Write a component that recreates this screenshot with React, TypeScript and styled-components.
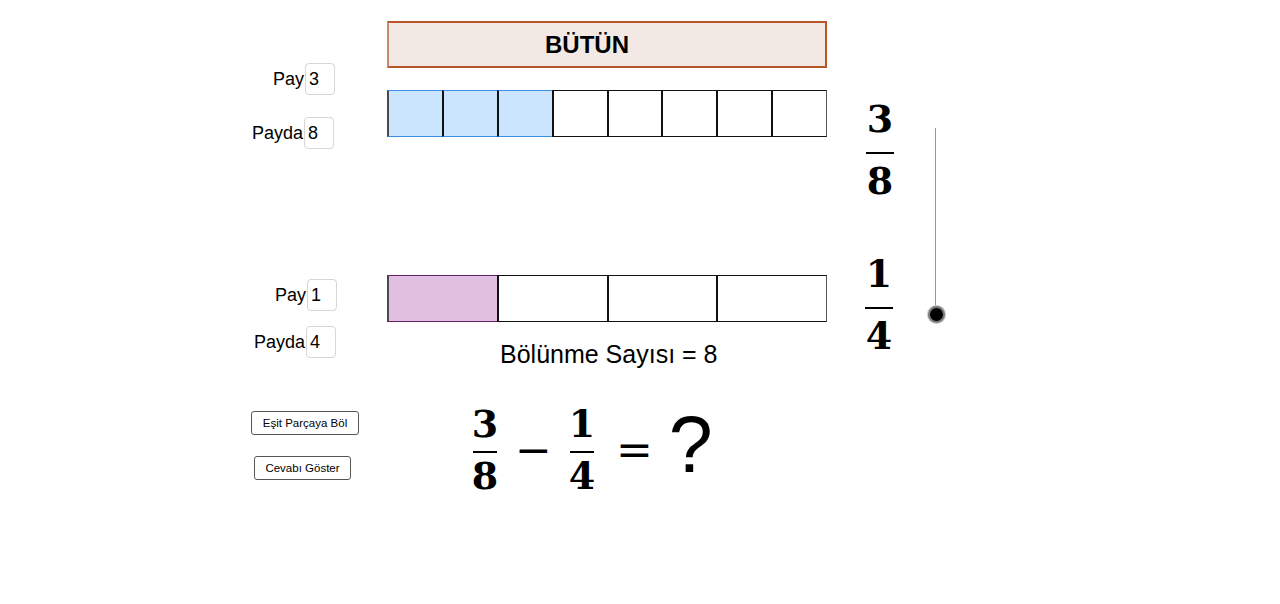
import styled, { createGlobalStyle, css } from 'styled-components';

const GlobalStyle = createGlobalStyle`
  html, body { margin: 0; padding: 0; background: #fff; }
  body { font-family: "Liberation Sans", Arial, sans-serif; color: #000; }
`;

type Pos = { $x: number; $y: number };

// geogebra-like canvas: objects sit at their own coordinates
const at = css<Pos>`
  position: absolute;
  left: ${(p) => p.$x}px;
  top: ${(p) => p.$y}px;
`;

const Applet = styled.div`
  position: relative;
  width: 1280px;
  height: 604px;
  overflow: hidden;
  background: #fff;
`;

const TitleBox = styled.div<Pos>`
  ${at};
  box-sizing: border-box;
  width: 440px;
  height: 47px;
  display: flex;
  align-items: center;
  padding-left: 156px;
  background: #f2e9e4;
  border: 2px solid #b9572a;
  border-left-color: #c98a6c;
  font: bold 24px "Liberation Sans", Arial, sans-serif;
`;

const Bar = styled.div<Pos>`
  ${at};
  display: flex;
  width: 440px;
  height: 47px;
`;

const Cell = styled.div<{ $fill?: string; $edge?: string }>`
  flex: 1;
  box-sizing: border-box;
  background: ${(p) => p.$fill ?? '#fff'};
  border-top: 1.5px solid ${(p) => p.$edge ?? '#111'};
  border-bottom: 1.5px solid ${(p) => p.$edge ?? '#111'};
  border-left: 2px solid #111;
  &:first-child {
    border-left-color: ${(p) => (p.$edge ? '#4a4a4a' : '#555')};
  }
  &:last-child {
    border-right: 1.5px solid #555;
  }
`;

const Field = styled.label<Pos>`
  ${at};
  display: flex;
  align-items: center;
  font-size: 18px;
`;

const FieldInput = styled.input`
  box-sizing: border-box;
  width: 30px;
  height: 32px;
  margin: 0 0 0 1px;
  padding: 0 0 0 3px;
  border: 1px solid #d6d6d6;
  border-radius: 4px;
  background: #fff;
  font: 18px "Liberation Sans", Arial, sans-serif;
  color: #000;
  outline: none;
`;

const Caption = styled.div<Pos>`
  ${at};
  font-size: 25px;
  line-height: 25px;
  white-space: nowrap;
`;

const Frac = styled.div<{ $top: number; $bottom: number; $rule: number }>`
  display: flex;
  flex-direction: column;
  align-items: center;
  width: ${(p) => p.$rule}px;

  & > hr {
    width: 100%;
    height: 2px;
    margin: ${(p) => p.$top}px 0 ${(p) => p.$bottom}px;
    border: 0;
    background: #000;
  }
`;

const SideFrac = styled(Frac)<Pos>`
  ${at};
`;

const Digit = styled.span`
  display: block;
  height: 28px;
  font: bold 38px/28px "DejaVu Serif", "Liberation Serif", serif;
`;

const Formula = styled.div<Pos>`
  ${at};
  display: flex;
  align-items: flex-start;
  gap: 18px;
`;

const Op = styled.span<{ $drop: number; $shift?: number }>`
  margin-top: ${(p) => p.$drop}px;
  margin-left: ${(p) => p.$shift ?? 0}px;
  font: 44px/44px "DejaVu Serif", serif;
`;

const Question = styled.span`
  margin-top: -5px;
  margin-left: -2px;
  font: 79px/80px "Liberation Sans", Arial, sans-serif;
`;

const SliderTrack = styled.div<Pos>`
  ${at};
  width: 1px;
  height: 186px;
  background: #9a9a9a;
`;

const SliderKnob = styled.div<Pos>`
  ${at};
  box-sizing: border-box;
  width: 17px;
  height: 17px;
  border-radius: 50%;
  background: #000;
  border: 2.5px solid #7a7a7a;
  box-shadow: 0 0 0 1px #c9c9c9;
`;

const Button = styled.button<Pos & { $w: number }>`
  ${at};
  box-sizing: border-box;
  width: ${(p) => p.$w}px;
  height: 24px;
  padding: 0;
  border: 1px solid #555;
  border-radius: 3px;
  background: #fff;
  font: 11.5px "Liberation Sans", Arial, sans-serif;
  color: #000;
  cursor: pointer;
`;

function Fraction({ num, den, gapTop, gapBottom, rule }: { num: string; den: string; gapTop: number; gapBottom: number; rule: number }) {
  return (
    <Frac $top={gapTop} $bottom={gapBottom} $rule={rule}>
      <Digit>{num}</Digit>
      <hr />
      <Digit>{den}</Digit>
    </Frac>
  );
}

export default function App() {
  const top = 8;
  const topFilled = 3;
  const bottom = 4;
  const bottomFilled = 1;

  return (
    <>
      <GlobalStyle />
      <Applet>
        <TitleBox $x={387} $y={21}>BÜTÜN</TitleBox>

        <Field $x={273} $y={63}>
          Pay<FieldInput defaultValue="3" />
        </Field>
        <Field $x={252} $y={117}>
          Payda<FieldInput defaultValue="8" />
        </Field>

        <Bar $x={387} $y={90}>
          {Array.from({ length: top }, (_, i) => (
            <Cell key={i} $fill={i < topFilled ? '#cce5ff' : undefined} $edge={i < topFilled ? '#3d8ee6' : undefined} />
          ))}
        </Bar>

        <Field $x={275} $y={279}>
          Pay<FieldInput defaultValue="1" />
        </Field>
        <Field $x={254} $y={326}>
          Payda<FieldInput defaultValue="4" />
        </Field>

        <Bar $x={387} $y={275}>
          {Array.from({ length: bottom }, (_, i) => (
            <Cell key={i} $fill={i < bottomFilled ? '#e0bfe0' : undefined} $edge={i < bottomFilled ? '#6a1f6a' : undefined} />
          ))}
        </Bar>

        <Caption $x={500} $y={342}>Bölünme Sayısı = 8</Caption>

        <SideFrac $x={866} $y={105} $top={19} $bottom={13} $rule={28}>
          <Digit>3</Digit>
          <hr />
          <Digit>8</Digit>
        </SideFrac>
        <SideFrac $x={865} $y={260} $top={19} $bottom={13} $rule={28}>
          <Digit>1</Digit>
          <hr />
          <Digit>4</Digit>
        </SideFrac>

        <SliderTrack $x={935} $y={128} />
        <SliderKnob $x={928} $y={306} />

        <Button $x={251} $y={411} $w={108}>Eşit Parçaya Böl</Button>
        <Button $x={254} $y={456} $w={97}>Cevabı Göster</Button>

        <Formula $x={473} $y={410}>
          <Fraction num="3" den="8" gapTop={13} gapBottom={9} rule={24} />
          <Op $drop={18}>−</Op>
          <Fraction num="1" den="4" gapTop={13} gapBottom={9} rule={24} />
          <Op $drop={18} $shift={4}>=</Op>
          <Question>?</Question>
        </Formula>
      </Applet>
    </>
  );
}
